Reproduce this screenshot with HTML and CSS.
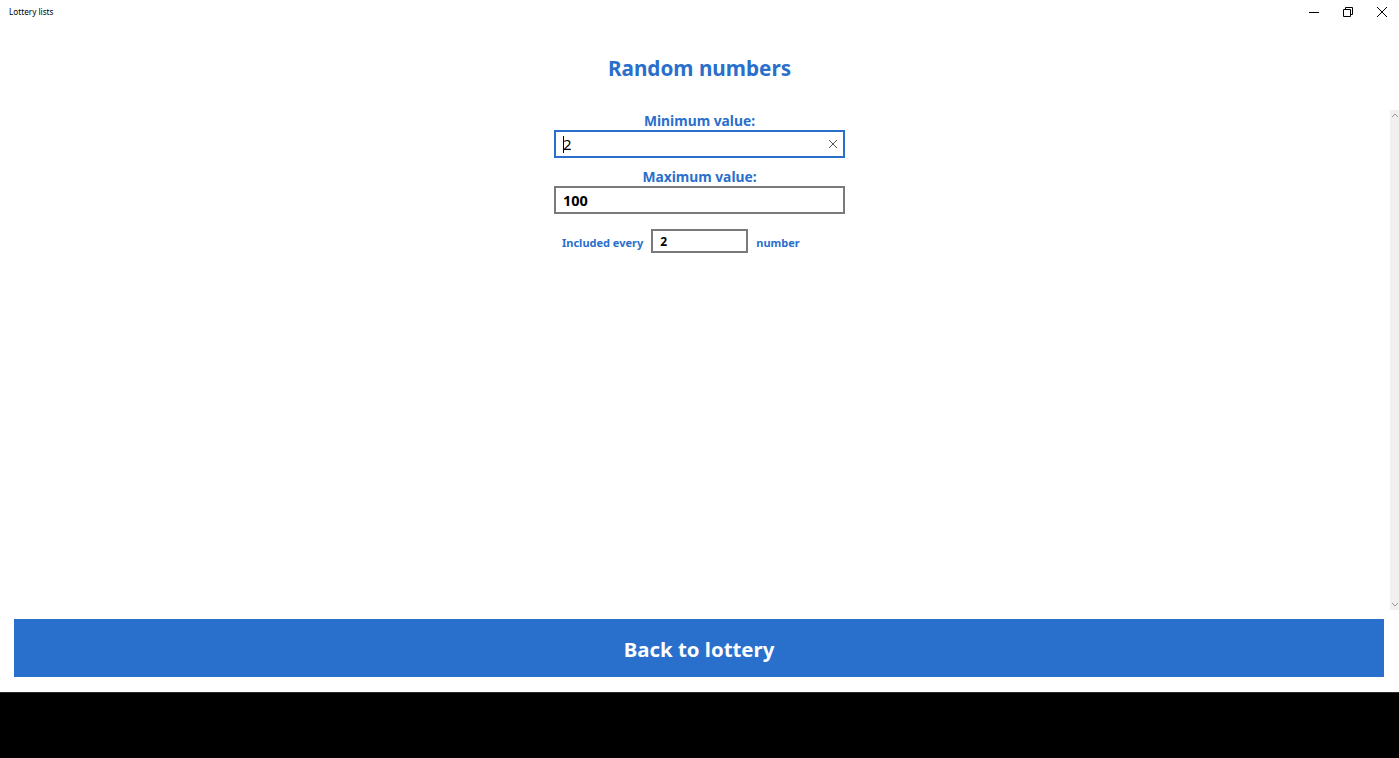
FILE: index.html
```html
<!DOCTYPE html>
<html lang="en">
<head>
<meta charset="utf-8">
<title>Lottery lists</title>
<link rel="stylesheet" href="styles.css">
</head>
<body>
<div class="window">
  <header class="titlebar">
    <span class="app-title">Lottery lists</span>
    <div class="controls">
      <span class="ctl">
        <svg width="10" height="10" viewBox="0 0 10 10"><path d="M0 5.5H10" stroke="#000" stroke-width="1"/></svg>
      </span>
      <span class="ctl">
        <svg width="10" height="10" viewBox="0 0 10 10"><path d="M0.5 2.5H7.5V9.5H0.5Z M2.5 2.5V0.5H9.5V7.5H7.5" fill="none" stroke="#000" stroke-width="1"/></svg>
      </span>
      <span class="ctl">
        <svg width="10" height="10" viewBox="0 0 10 10"><path d="M0 0L10 10M10 0L0 10" stroke="#000" stroke-width="1"/></svg>
      </span>
    </div>
  </header>
  <main class="main">
    <div class="scroller">
      <section class="form">
        <h1 class="heading">Random numbers</h1>
        <div class="column">
          <label class="label">Minimum value:</label>
          <div class="field field-focus">
            <span class="caret"></span><span class="value value-regular">2</span>
            <svg class="clear" width="8" height="8" viewBox="0 0 8 8"><path d="M0 0L8 8M8 0L0 8" stroke="#555" stroke-width="1"/></svg>
          </div>
          <label class="label label-second">Maximum value:</label>
          <div class="field">
            <span class="value">100</span>
          </div>
          <div class="every">
            <span class="small-label">Included every</span>
            <div class="small-field"><span class="small-value">2</span></div>
            <span class="small-label">number</span>
          </div>
        </div>
      </section>
      <div class="scrollbar">
        <svg width="6" height="4" viewBox="0 0 6 4"><path d="M0 4L3 1L6 4" fill="none" stroke="#999" stroke-width="1"/></svg>
        <svg width="6" height="4" viewBox="0 0 6 4"><path d="M0 0L3 3L6 0" fill="none" stroke="#999" stroke-width="1"/></svg>
      </div>
    </div>
    <div class="actions">
      <button class="back">Back to lottery</button>
    </div>
  </main>
  <div class="taskbar"></div>
</div>
</body>
</html>
```
FILE: styles.css
```css
* { box-sizing: border-box; }
html, body {
  margin: 0;
  padding: 0;
  background: #fff;
}
body {
  font-family: "Noto Sans", "Open Sans", "Liberation Sans", sans-serif;
}
.window {
  width: 1399px;
  height: 758px;
  display: flex;
  flex-direction: column;
  overflow: hidden;
}
.titlebar {
  height: 23px;
  display: flex;
  align-items: center;
  justify-content: space-between;
  flex-shrink: 0;
}
.app-title {
  font-size: 8.2px;
  color: #000;
  padding-left: 9px;
}
.controls {
  display: flex;
}
.ctl {
  width: 34px;
  height: 23px;
  display: flex;
  align-items: center;
  justify-content: center;
}
.main {
  flex: 1;
  display: flex;
  flex-direction: column;
}
.scroller {
  flex: 1;
  display: flex;
}
.form {
  flex: 1;
  display: flex;
  flex-direction: column;
  align-items: center;
}
.heading {
  margin: 29px 0 0 9px;
  font-size: 20.7px;
  line-height: 32px;
  font-weight: 700;
  color: #2a6fcc;
}
.column {
  width: 291px;
  margin-left: 9px;
  display: flex;
  flex-direction: column;
  align-items: center;
}
.label {
  margin-top: 28px;
  font-size: 13.8px;
  line-height: 18px;
  font-weight: 700;
  color: #2a6fcc;
}
.label-second { margin-top: 10px; }
.field {
  width: 291px;
  height: 28px;
  border: 2px solid #7a7a7a;
  display: flex;
  align-items: center;
  padding-left: 7px;
  padding-right: 6px;
}
.field-focus {
  border-color: #2a6fcc;
}
.caret {
  width: 1px;
  height: 17px;
  background: #000;
  margin-right: -1px;
}
.value {
  font-size: 14.5px;
  font-weight: 700;
  color: #000;
  flex: 1;
}
.value-regular { font-weight: 400; font-size: 15px; }
.clear { flex-shrink: 0; }
.every {
  align-self: stretch;
  display: flex;
  align-items: center;
  gap: 8px;
  margin-top: 15px;
  padding-left: 8px;
}
.small-label {
  font-size: 11px;
  font-weight: 700;
  color: #2a6fcc;
  padding-top: 2px;
}
.small-field {
  width: 97px;
  height: 24px;
  border: 2px solid #7a7a7a;
  display: flex;
  align-items: center;
  padding-left: 7px;
}
.small-value {
  font-size: 12px;
  font-weight: 700;
  color: #000;
}
.scrollbar {
  width: 9px;
  margin-top: 87px;
  margin-bottom: 9px;
  background: #f0f0f0;
  display: flex;
  flex-direction: column;
  justify-content: space-between;
  align-items: center;
  padding: 3px 0 3px 0;
}
.actions {
  padding: 0 15px 15px 14px;
}
.back {
  width: 100%;
  height: 58px;
  border: none;
  background: #2970cd;
  color: #fff;
  font-family: "Noto Sans", "Open Sans", "Liberation Sans", sans-serif;
  font-size: 20.4px;
  font-weight: 700;
  padding: 2px 0 0 0;
  cursor: pointer;
}
.taskbar {
  height: 66px;
  flex-shrink: 0;
  background: #000;
  border-top: 1px solid #2b2b2b;
}
```
